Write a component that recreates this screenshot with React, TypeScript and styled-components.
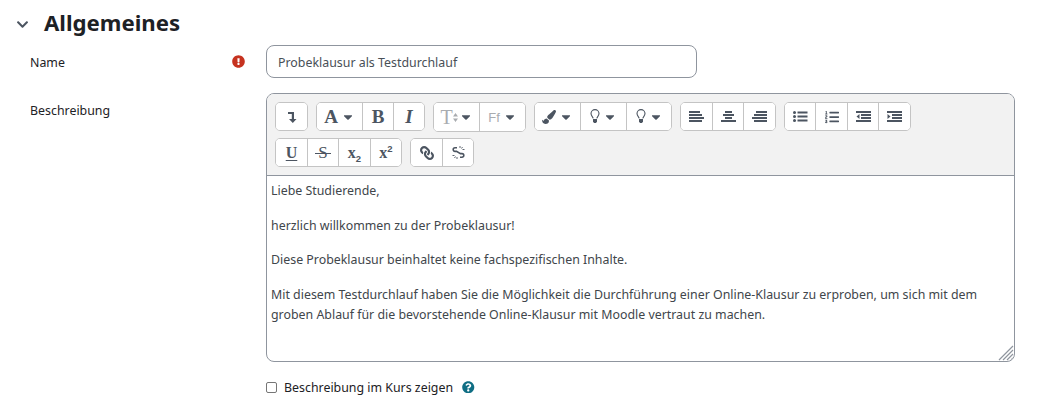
import React from "react";
import styled, { createGlobalStyle } from "styled-components";
import {
  FaCaretDown,
  FaChevronDown,
  FaExclamationCircle,
  FaLink,
  FaListOl,
  FaPaintBrush,
  FaQuestionCircle,
} from "react-icons/fa";

const GlobalStyle = createGlobalStyle`
  html, body {
    margin: 0;
    background: #fff;
    font-family: "Noto Sans", "Open Sans", sans-serif;
    font-size: 12.38px;
    color: #1d2125;
  }
`;

const Page = styled.div`
  width: 1044px;
  height: 414px;
  overflow: hidden;
  padding: 8px 29px 0 16px;
  box-sizing: border-box;
`;

const SectionHeader = styled.div`
  display: flex;
  align-items: center;
  height: 32px;
  margin-bottom: 5px;
  color: #1d2125;
  svg {
    color: #4c5561;
    width: 13px;
    height: 13px;
    margin-right: 15px;
  }
`;

const SectionTitle = styled.h3`
  margin: 0 0 2px;
  font-size: 22.2px;
  font-weight: 700;
  line-height: 32px;
`;

const FormRow = styled.div<{ $gap: number }>`
  display: grid;
  grid-template-columns: 14px 202px 34px 749px;
  margin-bottom: ${(p) => p.$gap}px;
`;

const Label = styled.label`
  grid-column: 2;
  line-height: 20px;
  padding-top: 8px;
`;

const RequiredMark = styled.span`
  grid-column: 3;
  color: #c6321f;
  font-size: 13px;
  padding-top: 10px;
  line-height: 13px;
`;

const Control = styled.div`
  grid-column: 4;
`;

const TextInput = styled.input`
  display: block;
  box-sizing: border-box;
  width: 431px;
  height: 33px;
  padding: 2px 11px 0;
  border: 1px solid #8f959e;
  border-radius: 8px;
  font: inherit;
  color: #495057;
`;

const Editor = styled.div`
  box-sizing: border-box;
  width: 749px;
  height: 269px;
  border: 1px solid #8f959e;
  border-radius: 8px;
  overflow: hidden;
  display: flex;
  flex-direction: column;
`;

const Toolbar = styled.div`
  height: 82px;
  box-sizing: border-box;
  padding: 8px 8px 0;
  background: #f2f2f2;
  border-bottom: 1px solid #8f959e;
`;

const ToolRow = styled.div`
  display: flex;
  height: 29px;
  gap: 8px;
  margin-bottom: 7px;
`;

const ToolGroup = styled.div<{ $tall?: boolean }>`
  display: flex;
  background: #fff;
  border: 1px solid #c4c4c4;
  border-radius: 5px;
  box-sizing: border-box;
  height: ${(p) => (p.$tall ? 30 : 29)}px;
  overflow: hidden;
`;

const ToolButton = styled.button<{ $w: number; $muted?: boolean }>`
  box-sizing: border-box;
  width: ${(p) => p.$w}px;
  height: 100%;
  padding: 0;
  margin: 0;
  border: 0;
  border-right: 1px solid #c4c4c4;
  background: #fff;
  display: flex;
  align-items: center;
  justify-content: center;
  gap: 3px;
  color: ${(p) => (p.$muted ? "#a9acb0" : "#4c5561")};
  font-size: 14px;
  &:last-child {
    border-right: 0;
  }
  > svg.caret {
    color: #4c5561;
    font-size: 14px;
  }
`;

const SerifGlyph = styled.span<{ $size?: number; $italic?: boolean; $underline?: boolean; $weight?: number }>`
  font-family: "Liberation Serif", serif;
  font-weight: ${(p) => p.$weight ?? 700};
  font-size: ${(p) => p.$size ?? 18}px;
  font-style: ${(p) => (p.$italic ? "italic" : "normal")};
  text-decoration: ${(p) => (p.$underline ? "underline" : "none")};
  text-underline-offset: 2px;
  line-height: 1;
`;

const StrikeGlyph = styled.span`
  position: relative;
  font-family: "Liberation Serif", serif;
  font-size: 17px;
  line-height: 1;
  &::after {
    content: "";
    position: absolute;
    left: -3px;
    right: -3px;
    top: 9px;
    height: 1px;
    background: currentColor;
  }
`;

const SansGlyph = styled.span<{ $size: number }>`
  font-family: "Liberation Sans", sans-serif;
  font-weight: 400;
  font-size: ${(p) => p.$size}px;
  line-height: 1;
`;

const ScriptGlyph = styled.span`
  font-family: "Liberation Serif", serif;
  font-weight: 700;
  font-size: 16px;
  line-height: 1;
  sub,
  sup {
    font-family: "Liberation Sans", sans-serif;
    font-size: 9.5px;
    line-height: 0;
  }
`;

const SizeArrows = styled.svg`
  margin-left: -3px;
  margin-right: -2px;
`;

const MirroredLink = styled(FaLink)`
  transform: scaleX(-1);
`;

const EditorBody = styled.div`
  flex: 1;
  padding: 5px 4px 0;
  color: #41464b;
  line-height: 20px;
  position: relative;
`;

const Paragraph = styled.p`
  margin: 0 0 14.7px;
`;

const ResizeHandle = styled.svg`
  position: absolute;
  right: 0;
  bottom: 0;
`;

const CheckRow = styled.div`
  display: flex;
  align-items: center;
  margin-top: 15px;
  height: 20px;
`;

const CheckBox = styled.input`
  width: 11px;
  height: 11px;
  margin: 0 7px 0 0;
  appearance: none;
  border: 1px solid #767676;
  border-radius: 2px;
  background: #fff;
`;

const HelpIcon = styled.span`
  display: flex;
  color: #0f6e84;
  font-size: 12.5px;
  margin-left: 9px;
`;

const Caret = () => <FaCaretDown className="caret" />;

// four bars, each as [x, width], on a 15x12 grid
const Bars: React.FC<{ bars: [number, number][] }> = ({ bars }) => (
  <svg width="15" height="13" viewBox="0 0 15 13" fill="currentColor">
    {bars.map(([x, w], i) => (
      <rect key={i} x={x} y={1 + i * 3} width={w} height="2" />
    ))}
  </svg>
);

const Bulb = () => (
  <svg width="10" height="15" viewBox="0 0 10 15">
    <path
      d="M3.2 9.4C3 7.8 1 7 1 4.6a4 4 0 0 1 8 0C9 7 7 7.8 6.8 9.4"
      fill="none"
      stroke="currentColor"
      strokeWidth="1.1"
    />
    <path d="M3 10h4v2.6l-1 1.4H4l-1-1.4z" fill="currentColor" />
  </svg>
);

const BulletList = () => (
  <svg width="15" height="13" viewBox="0 0 15 13" fill="currentColor">
    <rect x="0" y="1" width="3" height="3" rx="1.5" />
    <rect x="0" y="5" width="3" height="3" rx="1.5" />
    <rect x="0" y="9" width="3" height="3" rx="1.5" />
    <rect x="4.5" y="1.5" width="10" height="2" />
    <rect x="4.5" y="5.5" width="10" height="2" />
    <rect x="4.5" y="9.5" width="10" height="2" />
  </svg>
);

const Indent: React.FC<{ out?: boolean }> = ({ out }) => (
  <svg width="15" height="13" viewBox="0 0 15 13" fill="currentColor">
    <rect x="0" y="1" width="15" height="2" />
    <rect x="5" y="4" width="10" height="2" />
    <rect x="5" y="7" width="10" height="2" />
    <rect x="0" y="10" width="15" height="2" />
    <path d={out ? "M3.5 4v5L0.5 6.5z" : "M0.5 4v5l3-2.5z"} />
  </svg>
);

const BrokenChain = () => (
  <svg width="15" height="15" viewBox="0 0 15 15" fill="none" stroke="currentColor" strokeWidth="1.6">
    <path d="M6 2.8h-2a1.8 1.8 0 0 0 0 3.6h1.5l4 2.2H11a1.8 1.8 0 0 1 0 3.6H9" />
    <path d="M9 1v2M11.5 2l-1 1.5M13.5 4.5h-2M1.5 10.5h2M3.5 13l1-1.5M6 14v-2" strokeWidth="0.9" />
  </svg>
);

const App: React.FC = () => {
  return (
    <Page>
      <GlobalStyle />
      <SectionHeader>
        <FaChevronDown />
        <SectionTitle>Allgemeines</SectionTitle>
      </SectionHeader>

      <FormRow $gap={15}>
        <Label>Name</Label>
        <RequiredMark>
          <FaExclamationCircle />
        </RequiredMark>
        <Control>
          <TextInput defaultValue="Probeklausur als Testdurchlauf" />
        </Control>
      </FormRow>

      <FormRow $gap={0}>
        <Label>Beschreibung</Label>
        <Control>
          <Editor>
            <Toolbar>
              <ToolRow>
                <ToolGroup>
                  <ToolButton $w={31}>
                    <svg width="12" height="14" viewBox="0 0 12 14">
                      <path d="M2 2h6v7h2.5L6.8 13 3 9h2.8V4H2z" fill="currentColor" />
                    </svg>
                  </ToolButton>
                </ToolGroup>
                <ToolGroup>
                  <ToolButton $w={46}>
                    <SerifGlyph $size={19}>A</SerifGlyph>
                    <Caret />
                  </ToolButton>
                  <ToolButton $w={31}>
                    <SerifGlyph $size={19}>B</SerifGlyph>
                  </ToolButton>
                  <ToolButton $w={30}>
                    <SerifGlyph $size={19} $italic>
                      I
                    </SerifGlyph>
                  </ToolButton>
                </ToolGroup>
                <ToolGroup $tall>
                  <ToolButton $w={46} $muted>
                    <SerifGlyph $size={20} $weight={400}>
                      T
                    </SerifGlyph>
                    <SizeArrows width="5" height="9" viewBox="0 0 5 9" fill="currentColor">
                      <path d="M2.5 0L5 3.5H0zM2.5 9L5 5.5H0z" />
                    </SizeArrows>
                    <Caret />
                  </ToolButton>
                  <ToolButton $w={45} $muted>
                    <SansGlyph $size={13}>Ff</SansGlyph>
                    <Caret />
                  </ToolButton>
                </ToolGroup>
                <ToolGroup>
                  <ToolButton $w={46}>
                    <FaPaintBrush />
                    <Caret />
                  </ToolButton>
                  <ToolButton $w={46}>
                    <Bulb />
                    <Caret />
                  </ToolButton>
                  <ToolButton $w={44}>
                    <Bulb />
                    <Caret />
                  </ToolButton>
                </ToolGroup>
                <ToolGroup>
                  <ToolButton $w={32}>
                    <Bars bars={[[0, 11], [0, 13], [0, 15], [0, 13]]} />
                  </ToolButton>
                  <ToolButton $w={31}>
                    <Bars bars={[[4, 7], [2, 11], [4, 7], [0, 15]]} />
                  </ToolButton>
                  <ToolButton $w={31}>
                    <Bars bars={[[4, 11], [2, 13], [0, 15], [2, 13]]} />
                  </ToolButton>
                </ToolGroup>
                <ToolGroup>
                  <ToolButton $w={31}>
                    <BulletList />
                  </ToolButton>
                  <ToolButton $w={32}>
                    <FaListOl />
                  </ToolButton>
                  <ToolButton $w={31}>
                    <Indent out />
                  </ToolButton>
                  <ToolButton $w={31}>
                    <Indent />
                  </ToolButton>
                </ToolGroup>
              </ToolRow>
              <ToolRow>
                <ToolGroup>
                  <ToolButton $w={32}>
                    <SerifGlyph $size={16} $underline>
                      U
                    </SerifGlyph>
                  </ToolButton>
                  <ToolButton $w={31}>
                    <StrikeGlyph>S</StrikeGlyph>
                  </ToolButton>
                  <ToolButton $w={32}>
                    <ScriptGlyph>
                      x<sub>2</sub>
                    </ScriptGlyph>
                  </ToolButton>
                  <ToolButton $w={30}>
                    <ScriptGlyph>
                      x<sup>2</sup>
                    </ScriptGlyph>
                  </ToolButton>
                </ToolGroup>
                <ToolGroup>
                  <ToolButton $w={32}>
                    <MirroredLink />
                  </ToolButton>
                  <ToolButton $w={30}>
                    <BrokenChain />
                  </ToolButton>
                </ToolGroup>
              </ToolRow>
            </Toolbar>
            <EditorBody>
              <Paragraph>Liebe Studierende,</Paragraph>
              <Paragraph>herzlich willkommen zu der Probeklausur!</Paragraph>
              <Paragraph>Diese Probeklausur beinhaltet keine fachspezifischen Inhalte.</Paragraph>
              <Paragraph>
                Mit diesem Testdurchlauf haben Sie die Möglichkeit die Durchführung einer
                Online-Klausur zu erproben, um sich mit dem
                <br />
                groben Ablauf für die bevorstehende Online-Klausur mit Moodle vertraut zu machen.
              </Paragraph>
              <ResizeHandle width="16" height="16" viewBox="0 0 16 16">
                <path d="M1 15L15 1M5 15L15 5M9 15L15 9M13 15L15 13" stroke="#8f959e" strokeWidth="1.2" fill="none" />
              </ResizeHandle>
            </EditorBody>
          </Editor>
          <CheckRow>
            <CheckBox type="checkbox" />
            <span>Beschreibung im Kurs zeigen</span>
            <HelpIcon>
              <FaQuestionCircle />
            </HelpIcon>
          </CheckRow>
        </Control>
      </FormRow>
    </Page>
  );
};

export default App;
